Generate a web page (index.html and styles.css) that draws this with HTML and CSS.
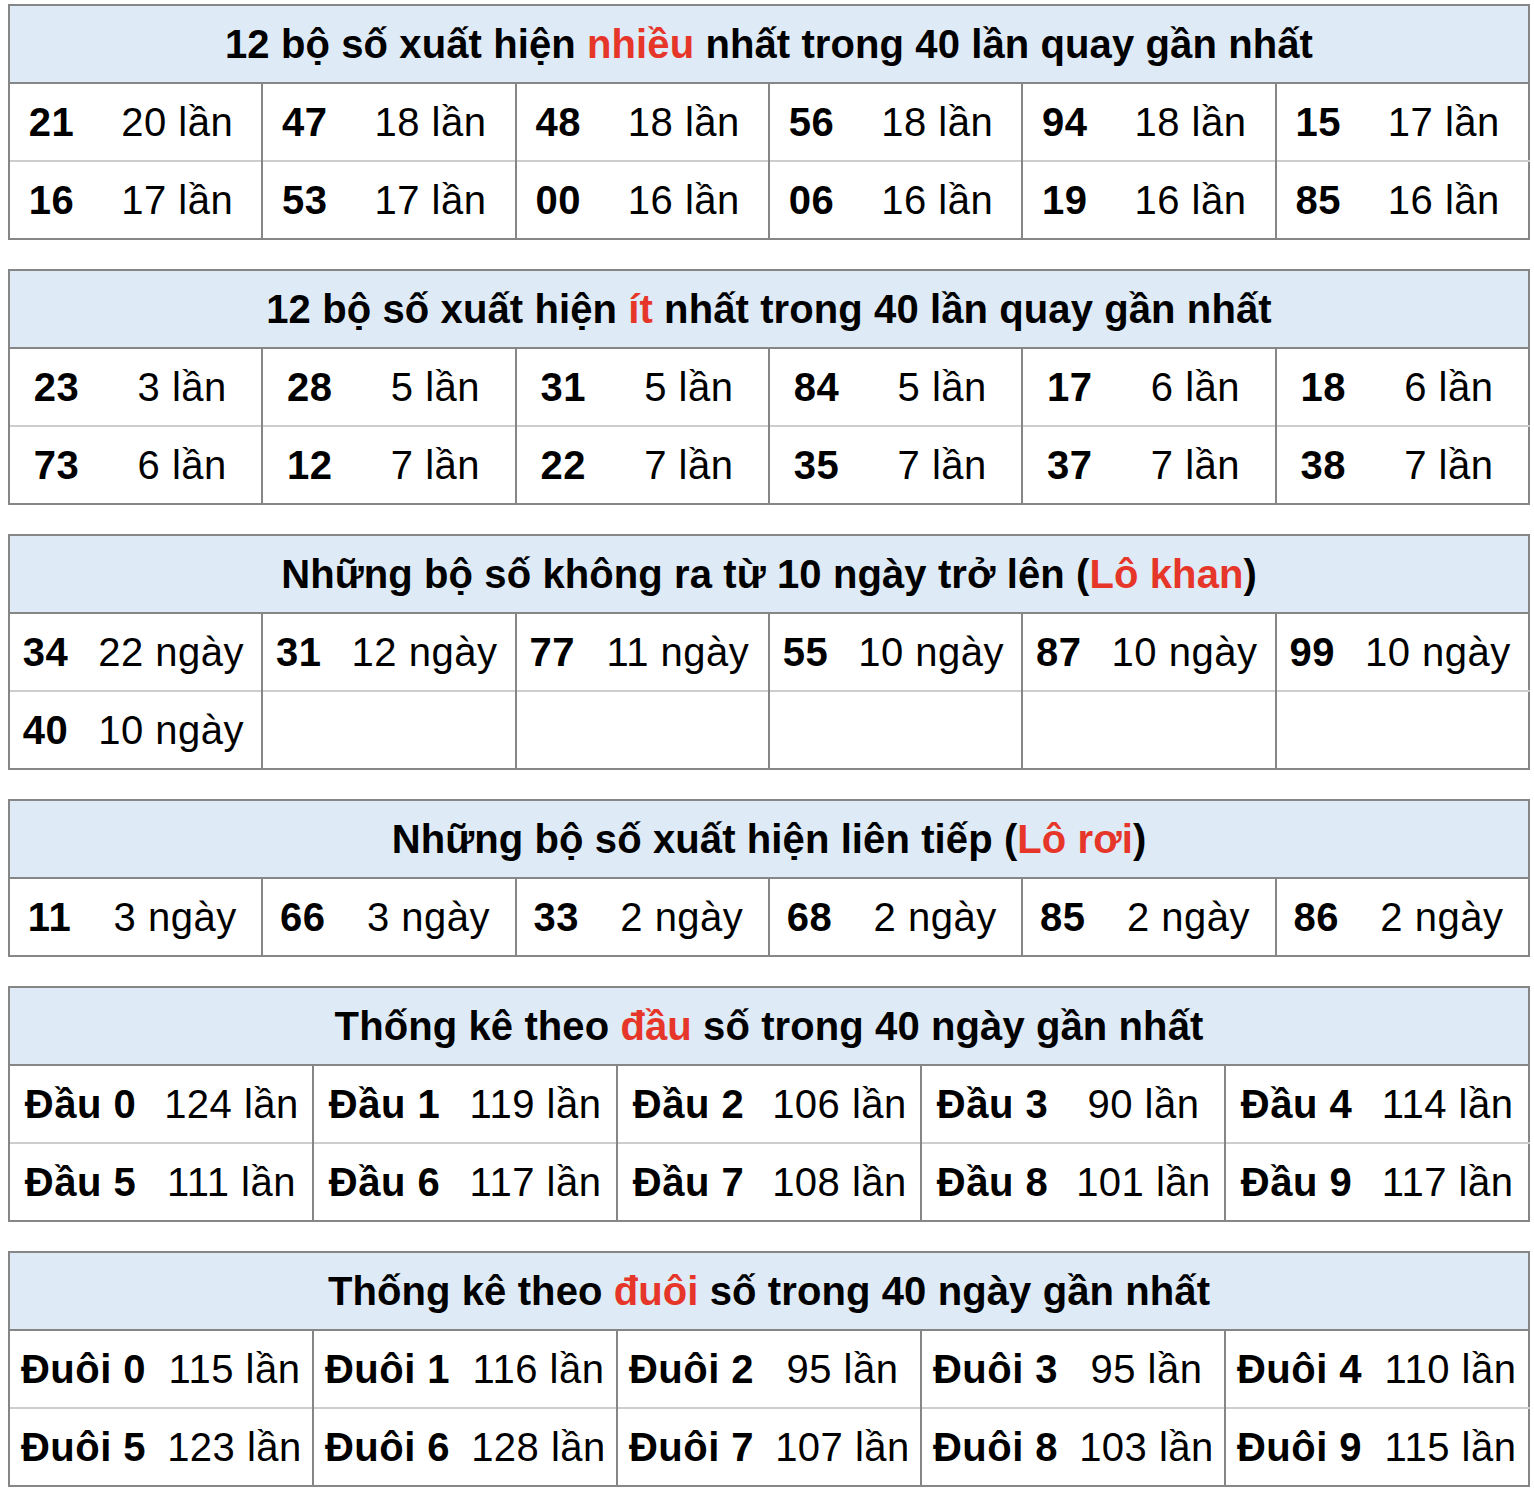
FILE: index.html
```html
<!DOCTYPE html>
<html lang="vi">
<head>
<meta charset="utf-8">
<title>Thống kê lô tô</title>
<link rel="stylesheet" href="styles.css">
</head>
<body>
<main class="page">

<table class="stat t1">
  <colgroup>
    <col class="cn"><col class="cc"><col class="cn"><col class="cc"><col class="cn"><col class="cc">
    <col class="cn"><col class="cc"><col class="cn"><col class="cc"><col class="cn"><col class="cc">
  </colgroup>
  <thead><tr><th colspan="12">12 bộ số xuất hiện <span class="hl">nhiều</span> nhất trong 40 lần quay gần nhất</th></tr></thead>
  <tbody>
    <tr>
      <td class="n">21</td><td class="c">20 lần</td>
      <td class="n">47</td><td class="c">18 lần</td>
      <td class="n">48</td><td class="c">18 lần</td>
      <td class="n">56</td><td class="c">18 lần</td>
      <td class="n">94</td><td class="c">18 lần</td>
      <td class="n">15</td><td class="c">17 lần</td>
    </tr>
    <tr>
      <td class="n">16</td><td class="c">17 lần</td>
      <td class="n">53</td><td class="c">17 lần</td>
      <td class="n">00</td><td class="c">16 lần</td>
      <td class="n">06</td><td class="c">16 lần</td>
      <td class="n">19</td><td class="c">16 lần</td>
      <td class="n">85</td><td class="c">16 lần</td>
    </tr>
  </tbody>
</table>

<table class="stat t2">
  <colgroup>
    <col class="cn"><col class="cc"><col class="cn"><col class="cc"><col class="cn"><col class="cc">
    <col class="cn"><col class="cc"><col class="cn"><col class="cc"><col class="cn"><col class="cc">
  </colgroup>
  <thead><tr><th colspan="12">12 bộ số xuất hiện <span class="hl">ít</span> nhất trong 40 lần quay gần nhất</th></tr></thead>
  <tbody>
    <tr>
      <td class="n">23</td><td class="c">3 lần</td>
      <td class="n">28</td><td class="c">5 lần</td>
      <td class="n">31</td><td class="c">5 lần</td>
      <td class="n">84</td><td class="c">5 lần</td>
      <td class="n">17</td><td class="c">6 lần</td>
      <td class="n">18</td><td class="c">6 lần</td>
    </tr>
    <tr>
      <td class="n">73</td><td class="c">6 lần</td>
      <td class="n">12</td><td class="c">7 lần</td>
      <td class="n">22</td><td class="c">7 lần</td>
      <td class="n">35</td><td class="c">7 lần</td>
      <td class="n">37</td><td class="c">7 lần</td>
      <td class="n">38</td><td class="c">7 lần</td>
    </tr>
  </tbody>
</table>

<table class="stat t3">
  <colgroup>
    <col class="cn"><col class="cc"><col class="cn"><col class="cc"><col class="cn"><col class="cc">
    <col class="cn"><col class="cc"><col class="cn"><col class="cc"><col class="cn"><col class="cc">
  </colgroup>
  <thead><tr><th colspan="12">Những bộ số không ra từ 10 ngày trở lên (<span class="hl">Lô khan</span>)</th></tr></thead>
  <tbody>
    <tr>
      <td class="n">34</td><td class="c">22 ngày</td>
      <td class="n">31</td><td class="c">12 ngày</td>
      <td class="n">77</td><td class="c">11 ngày</td>
      <td class="n">55</td><td class="c">10 ngày</td>
      <td class="n">87</td><td class="c">10 ngày</td>
      <td class="n">99</td><td class="c">10 ngày</td>
    </tr>
    <tr>
      <td class="n">40</td><td class="c">10 ngày</td>
      <td class="n"></td><td class="c"></td>
      <td class="n"></td><td class="c"></td>
      <td class="n"></td><td class="c"></td>
      <td class="n"></td><td class="c"></td>
      <td class="n"></td><td class="c"></td>
    </tr>
  </tbody>
</table>

<table class="stat t4">
  <colgroup>
    <col class="cn"><col class="cc"><col class="cn"><col class="cc"><col class="cn"><col class="cc">
    <col class="cn"><col class="cc"><col class="cn"><col class="cc"><col class="cn"><col class="cc">
  </colgroup>
  <thead><tr><th colspan="12">Những bộ số xuất hiện liên tiếp (<span class="hl">Lô rơi</span>)</th></tr></thead>
  <tbody>
    <tr>
      <td class="n">11</td><td class="c">3 ngày</td>
      <td class="n">66</td><td class="c">3 ngày</td>
      <td class="n">33</td><td class="c">2 ngày</td>
      <td class="n">68</td><td class="c">2 ngày</td>
      <td class="n">85</td><td class="c">2 ngày</td>
      <td class="n">86</td><td class="c">2 ngày</td>
    </tr>
  </tbody>
</table>

<table class="stat t5">
  <colgroup>
    <col class="cn"><col class="cc"><col class="cn"><col class="cc"><col class="cn"><col class="cc">
    <col class="cn"><col class="cc"><col class="cn"><col class="cc">
  </colgroup>
  <thead><tr><th colspan="10">Thống kê theo <span class="hl">đầu</span> số trong 40 ngày gần nhất</th></tr></thead>
  <tbody>
    <tr>
      <td class="n">Đầu 0</td><td class="c">124 lần</td>
      <td class="n">Đầu 1</td><td class="c">119 lần</td>
      <td class="n">Đầu 2</td><td class="c">106 lần</td>
      <td class="n">Đầu 3</td><td class="c">90 lần</td>
      <td class="n">Đầu 4</td><td class="c">114 lần</td>
    </tr>
    <tr>
      <td class="n">Đầu 5</td><td class="c">111 lần</td>
      <td class="n">Đầu 6</td><td class="c">117 lần</td>
      <td class="n">Đầu 7</td><td class="c">108 lần</td>
      <td class="n">Đầu 8</td><td class="c">101 lần</td>
      <td class="n">Đầu 9</td><td class="c">117 lần</td>
    </tr>
  </tbody>
</table>

<table class="stat t6">
  <colgroup>
    <col class="cn"><col class="cc"><col class="cn"><col class="cc"><col class="cn"><col class="cc">
    <col class="cn"><col class="cc"><col class="cn"><col class="cc">
  </colgroup>
  <thead><tr><th colspan="10">Thống kê theo <span class="hl">đuôi</span> số trong 40 ngày gần nhất</th></tr></thead>
  <tbody>
    <tr>
      <td class="n">Đuôi 0</td><td class="c">115 lần</td>
      <td class="n">Đuôi 1</td><td class="c">116 lần</td>
      <td class="n">Đuôi 2</td><td class="c">95 lần</td>
      <td class="n">Đuôi 3</td><td class="c">95 lần</td>
      <td class="n">Đuôi 4</td><td class="c">110 lần</td>
    </tr>
    <tr>
      <td class="n">Đuôi 5</td><td class="c">123 lần</td>
      <td class="n">Đuôi 6</td><td class="c">128 lần</td>
      <td class="n">Đuôi 7</td><td class="c">107 lần</td>
      <td class="n">Đuôi 8</td><td class="c">103 lần</td>
      <td class="n">Đuôi 9</td><td class="c">115 lần</td>
    </tr>
  </tbody>
</table>

</main>
</body>
</html>
```

FILE: styles.css
```css
html, body {
  margin: 0;
  padding: 0;
  background: #ffffff;
}

body {
  font-family: "Liberation Sans", Arial, Helvetica, sans-serif;
  color: #000000;
}

.page {
  padding: 4px 0 0 8px;
}

.stat {
  width: 1520px;
  border-collapse: collapse;
  table-layout: fixed;
  border: 2px solid #868686;
  margin: 0 0 29px 0;
  font-size: 40px;
}

.stat th {
  height: 76px;
  padding: 0;
  background: #deeaf6;
  border-bottom: 2px solid #868686;
  font-weight: 700;
  text-align: center;
  vertical-align: middle;
  letter-spacing: 0.1px;
}

.stat td {
  height: 76px;
  padding: 0;
  text-align: center;
  vertical-align: middle;
  white-space: nowrap;
  letter-spacing: 0.5px;
}

.stat td.n {
  font-weight: 700;
  border-left: 2px solid #868686;
}

.stat tbody tr + tr td {
  border-top: 2px solid #cdcdcd;
}

.hl {
  color: #e6362a;
}

.t1 .cn { width: 84px; }
.t1 .cc { width: 169.33px; }
.t2 .cn { width: 94px; }
.t2 .cc { width: 159.33px; }
.t3 .cn { width: 72px; }
.t3 .cc { width: 181.33px; }
.t4 .cn { width: 80px; }
.t4 .cc { width: 173.33px; }
.t5 .cn { width: 142px; }
.t5 .cc { width: 162px; }
.t6 .cn { width: 148px; }
.t6 .cc { width: 156px; }
```
